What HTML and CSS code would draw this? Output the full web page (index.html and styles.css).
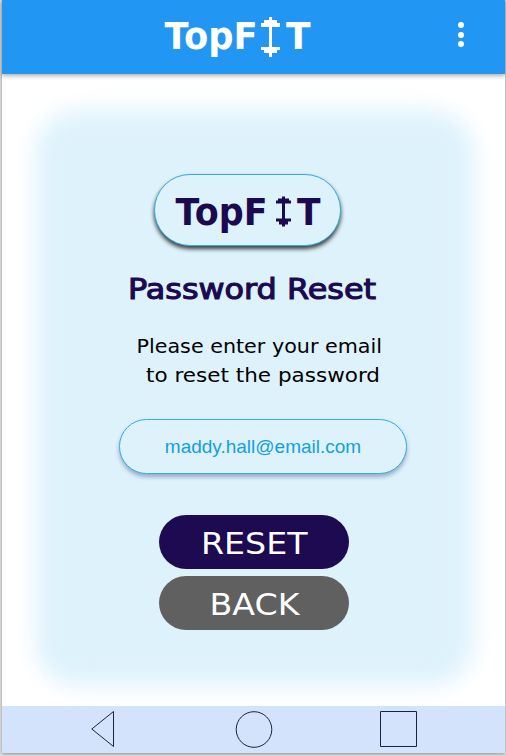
FILE: index.html
```html
<!DOCTYPE html>
<html lang="en">
<head>
<meta charset="utf-8">
<title>TopFIT – Password Reset</title>
<link rel="stylesheet" href="styles.css">
</head>
<body>
<div class="phone">
  <header class="topbar">
    <svg class="brand" width="150" height="46" viewBox="162 14 150 46">
      <text x="164.500" y="49" textLength="93" lengthAdjust="spacingAndGlyphs">TopF</text>
      <path d="M269 17h3v3h5v3h3v4h-8v20h8v3h-3v3h-5v4h-3v-4h-5v-3h-3v-3h8V27h-8v-4h3v-3h5z"/>
      <text x="286" y="49" textLength="24.500" lengthAdjust="spacingAndGlyphs">T</text>
    </svg>
    <div class="menu"><i></i><i></i><i></i></div>
  </header>
  <main class="screen">
    <section class="card">
      <div class="logo-pill">
        <svg class="brand small" width="150" height="46" viewBox="173 190 150 46">
          <text x="175.500" y="225" textLength="92" lengthAdjust="spacingAndGlyphs">TopF</text>
          <path d="M282 196.500h3v2h4v2h2v3h-6v15h6v3h-3v3h-3v2h-3v-2h-3v-3h-3v-3h6v-15h-6v-3h2v-2h4z"/>
          <text x="297" y="225" textLength="23.500" lengthAdjust="spacingAndGlyphs">T</text>
        </svg>
      </div>
      <svg class="heading" width="252" height="34" viewBox="126 272 252 34">
        <text x="128" y="299" textLength="248" lengthAdjust="spacingAndGlyphs">Password Reset</text>
      </svg>
      <svg class="hint" width="250" height="58" viewBox="135 332 250 58">
        <text x="136.500" y="353" textLength="245.500" lengthAdjust="spacingAndGlyphs">Please enter your email</text>
        <text x="146" y="382" textLength="234" lengthAdjust="spacingAndGlyphs">to reset the password</text>
      </svg>
      <div class="email">maddy.hall@email.com</div>
      <div class="button reset">
        <svg width="190" height="54" viewBox="158 515 190 54"><text x="200" y="554" textLength="106.500" lengthAdjust="spacingAndGlyphs">RESET</text></svg>
      </div>
      <div class="button back">
        <svg width="190" height="54" viewBox="158 576 190 54"><text x="208.500" y="615" textLength="90" lengthAdjust="spacingAndGlyphs">BACK</text></svg>
      </div>
    </section>
  </main>
  <nav class="navbar">
    <svg width="24" height="38" viewBox="0 0 24 38"><path d="M.800 19 22.500 1.500v35z"/></svg>
    <svg class="home" width="38" height="38" viewBox="0 0 38 38"><circle cx="19" cy="19.500" r="17.800"/></svg>
    <svg width="38" height="38" viewBox="0 0 38 38"><path d="M.500 1.500h36v35h-36z"/></svg>
  </nav>
</div>
</body>
</html>
```

FILE: styles.css
```css
* { box-sizing: border-box; }
html, body { height: 100%; }
body {
  margin: 0;
  padding: 0 1px 3px 2px;
  background: #dedfe0;
  overflow: hidden;
  font-family: "DejaVu Sans", sans-serif;
}
svg { display: block; overflow: visible; }
.phone {
  height: 753px;
  display: flex;
  flex-direction: column;
  background: #fff;
  box-shadow: 0 1px 3px rgba(0, 0, 0, .35);
}
.topbar {
  height: 74px;
  flex: none;
  display: flex;
  justify-content: space-between;
  align-items: flex-start;
  padding: 14px 41px 0 160px;
  background: #2196f3;
  box-shadow: 0 2px 4px rgba(60, 60, 60, .4);
  z-index: 1;
}
.brand { fill: #fff; font-size: 38px; font-weight: 700; }
.brand.small { fill: #1b0a4f; font-size: 36.5px; }
.menu {
  display: flex;
  flex-direction: column;
  gap: 3.5px;
  padding-top: 8px;
}
.menu i { width: 6px; height: 6px; border-radius: 50%; background: #fff; }
.screen { flex: 1; padding: 37px 33px 23px 34px; }
.card {
  position: relative;
  isolation: isolate;
  height: 572px;
  display: flex;
  flex-direction: column;
  align-items: flex-start;
}
.card::before {
  content: "";
  position: absolute;
  z-index: -1;
  inset: -1px -2px -3px -1px;
  border-radius: 44px;
  background: #def2fc;
  filter: blur(11px);
}
.logo-pill {
  margin: 63px 0 0 118px;
  width: 187px;
  height: 72px;
  padding: 15px 0 0 18px;
  border: 1px solid #35aedb;
  border-radius: 36px;
  background: #def2fc;
  box-shadow: 0 3px 4px rgba(0, 0, 0, .75);
}
.heading {
  margin: 26px 0 0 90px;
  fill: #1b0a4f;
  stroke: #1b0a4f;
  stroke-width: 1.1px;
  font-size: 28px;
}
.hint { margin: 26px 0 0 99px; font-size: 19px; fill: #000; }
.email {
  margin: 29px 0 0 83px;
  width: 288px;
  height: 55px;
  border: 1px solid #35aedb;
  border-radius: 28px;
  background: #def2fc;
  box-shadow: 0 3px 4px rgba(20, 40, 100, .35);
  color: #159fdc;
  font: 19px/54px "Liberation Sans", Arial, sans-serif;
  text-align: center;
}
.button {
  width: 190px;
  height: 54px;
  margin-left: 123px;
  border-radius: 27px;
  fill: #fff;
  font-size: 30px;
}
.reset { margin-top: 41px; background: #1d0a50; }
.back { margin-top: 7px; background: #606060; }
.navbar {
  height: 47px;
  flex: none;
  display: flex;
  align-items: flex-start;
  padding: 4px 87px 0 89px;
  background: #d2e3fb;
}
.navbar svg { fill: none; stroke: #1b2438; stroke-width: 1; }
.navbar .home { margin: 0 107px 0 120px; }
```
